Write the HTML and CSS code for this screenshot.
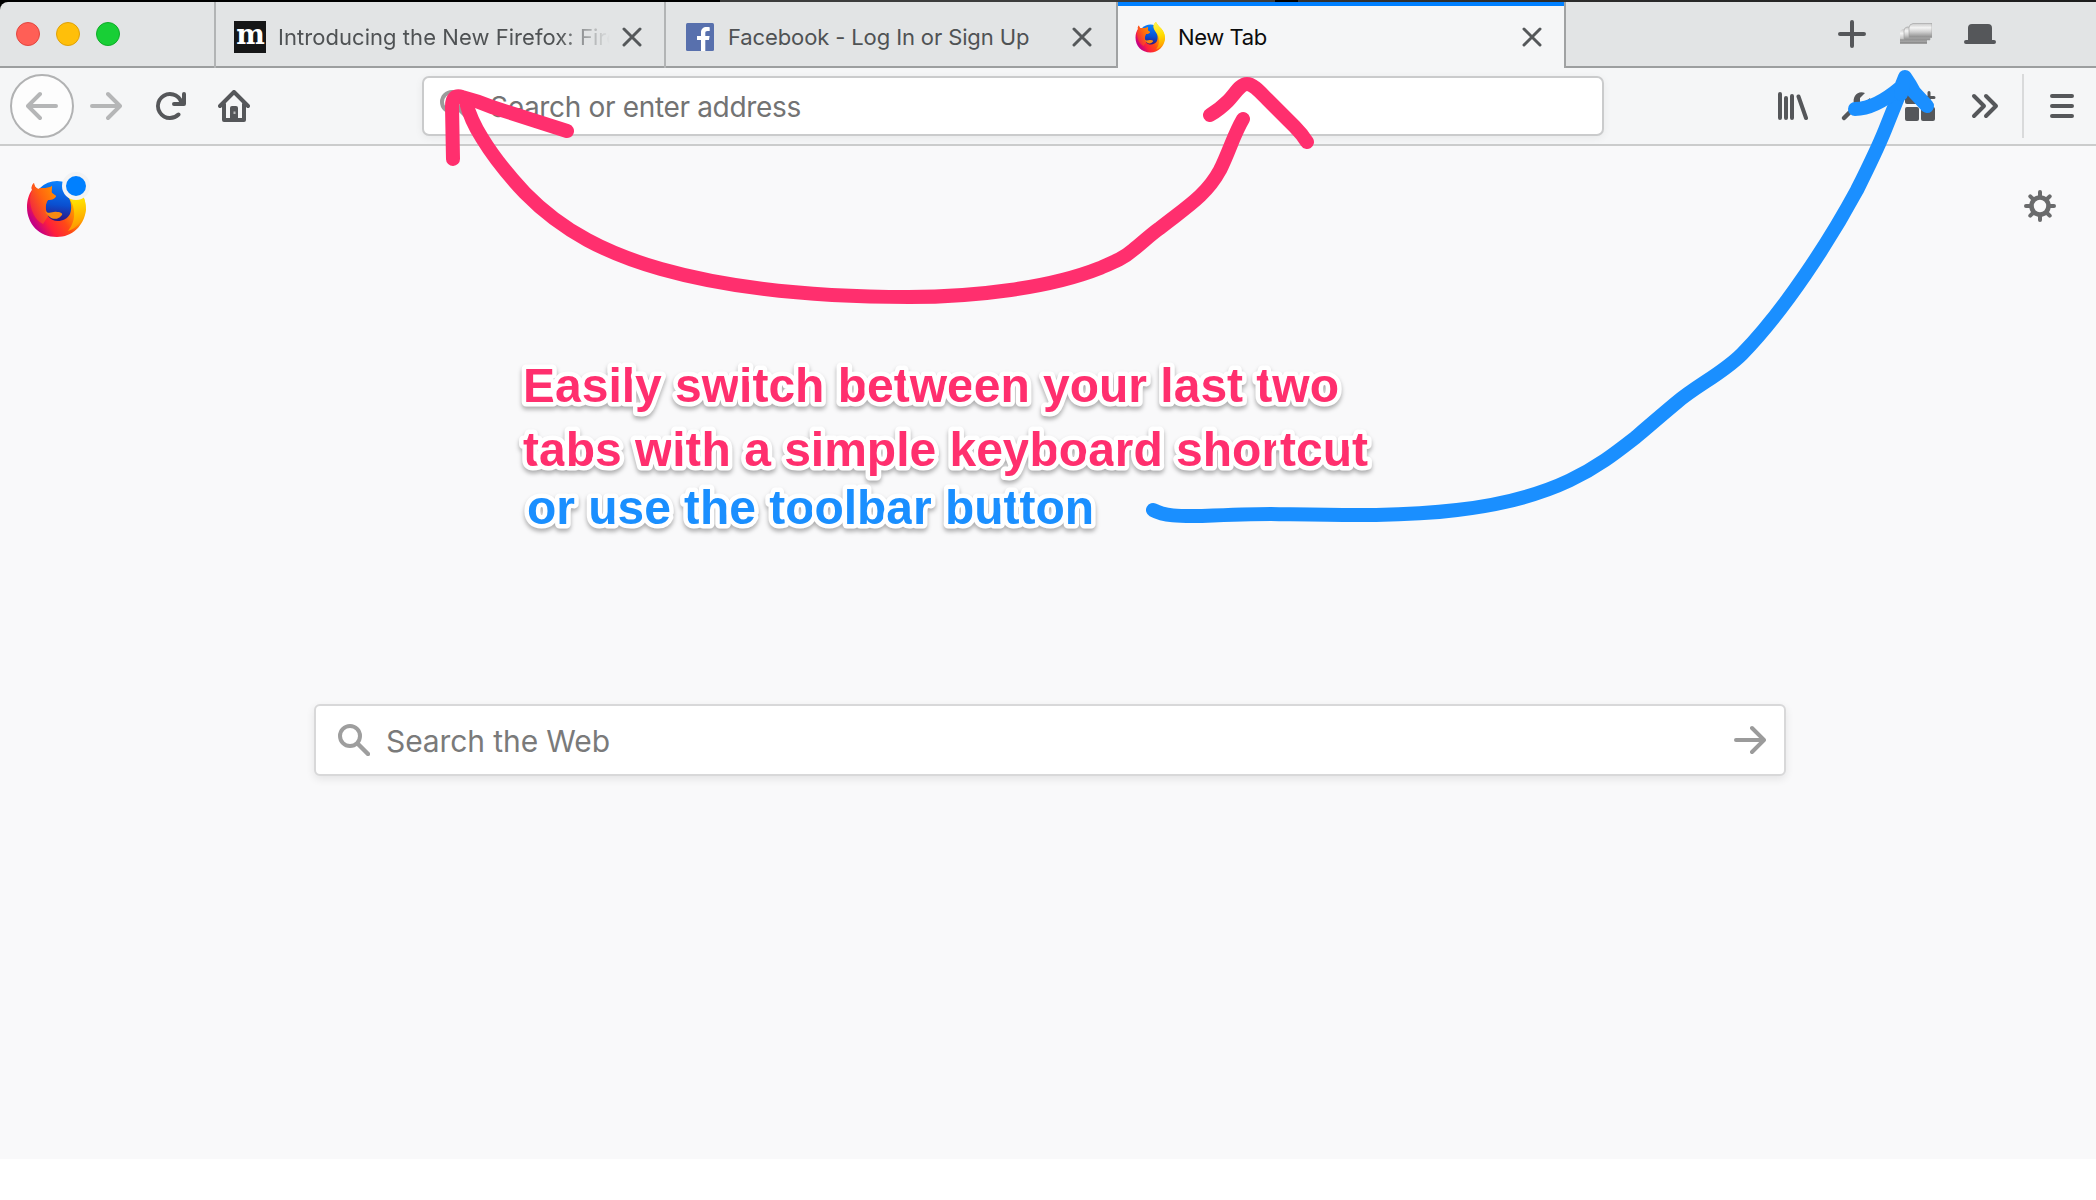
FILE: index.html
```html
<!DOCTYPE html>
<html lang="en">
<head>
<meta charset="utf-8">
<title>New Tab</title>
<link rel="stylesheet" href="styles.css">
</head>
<body>
<svg class="defs" width="0" height="0" aria-hidden="true">
  <defs>
    <linearGradient id="fox-body" x1="0.9" y1="0.2" x2="0.1" y2="0.75">
      <stop offset="0" stop-color="#ffe200"/><stop offset=".3" stop-color="#ff9a00"/><stop offset=".55" stop-color="#ff4a16"/><stop offset=".8" stop-color="#ff1f3c"/><stop offset="1" stop-color="#c40084"/>
    </linearGradient>
    <linearGradient id="fox-globe" x1=".6" y1="0" x2=".5" y2="1">
      <stop offset="0" stop-color="#0a84ff"/><stop offset=".5" stop-color="#0a4fd0"/><stop offset=".85" stop-color="#33107a"/>
    </linearGradient>
    <linearGradient id="fox-head" x1="1" y1="0" x2="0" y2=".8">
      <stop offset="0" stop-color="#ff9a00"/><stop offset=".5" stop-color="#ff6410"/><stop offset="1" stop-color="#ee1a4c"/>
    </linearGradient>
    <linearGradient id="fox-tail" x1=".4" y1="0" x2=".5" y2="1">
      <stop offset="0" stop-color="#fff44f"/><stop offset=".5" stop-color="#ffdc00"/><stop offset="1" stop-color="#ff9200"/>
    </linearGradient>
    <linearGradient id="stack" x1="0" y1="0" x2="0" y2="1">
      <stop offset="0" stop-color="#c9c9c9"/><stop offset=".3" stop-color="#f4f4f4"/><stop offset=".6" stop-color="#cfcfcf"/><stop offset="1" stop-color="#8a8a8a"/>
    </linearGradient>
    <symbol id="firefox" viewBox="0 0 64 64">
      <circle cx="33" cy="31" r="24" fill="url(#fox-globe)"/>
      <path d="M10 9C10 12 12 14 14 15C19 13 24 15 28 12C28 16 27 17 28 19L32 22C31 25 27 26 24 26C21 30 21 36 24 42C29 50 42 48 46 40C49 32 46 24 42 19C37 12 39 6 44 2C46 8 53 12 58 20C61 25 62 30 62 36C60 52 48 63 33 63C15 63 3 50 3 33C3 26 5 20 8 16C7 13 8 11 10 9Z" fill="url(#fox-body)"/>
      <path d="M44 2C46 8 53 12 58 20C62 27 62 33 61 39C58 48 53 54 44 57C49 51 52 42 49 32C47 24 39 19 39 11C39 7 41 4 44 2Z" fill="url(#fox-tail)"/>
      <path d="M10 9C10 12 12 14 14 15C19 13 24 15 28 12C28 16 27 17 28 19L32 22C31 25 27 26 24 26C21 30 21 36 24 42L19 50C11 46 6 36 6 24L8 16C7 13 8 11 10 9Z" fill="url(#fox-head)"/>
      <path d="M21 37C26 41 28 37 33 38C37 38 40 40 37 42C34 46 26 47 21 37Z" fill="#f78a12"/>
    </symbol>
    <symbol id="close" viewBox="0 0 20 20"><path d="M2 2L18 18M18 2L2 18" fill="none" stroke="#55585a" stroke-width="3" stroke-linecap="round"/></symbol>
    <symbol id="arrow" viewBox="0 0 16 16"><path d="M1 7h11.586L8.293 2.707a1 1 0 0 1 1.414-1.414l6 6a1 1 0 0 1 0 1.414l-6 6a1 1 0 0 1-1.414-1.414L12.586 9H1a1 1 0 0 1 0-2z"/></symbol>
    <symbol id="glass" viewBox="0 0 32 32"><path d="M20 20L30 30" stroke="currentColor" stroke-width="4.4" stroke-linecap="round"/><circle cx="12" cy="12" r="10" fill="none" stroke="currentColor" stroke-width="4"/></symbol>
  </defs>
</svg>

<div class="desktop-edge"></div>
<div class="window">
  <header class="tabbar">
    <div class="lights"><i class="light red"></i><i class="light yellow"></i><i class="light green"></i></div>
    <div class="tab first">
      <span class="fav-m">m</span>
      <span class="label fade">Introducing the New Firefox: Fire</span>
      <svg class="close"><use href="#close"/></svg>
    </div>
    <div class="tab second">
      <svg class="fav-f" viewBox="0 0 28 28"><rect width="28" height="28" rx="1.5" fill="#5870ad"/><path d="M15 28V17h-4v-4h4v-3.400C15 6 17.200 4 20.500 4c1.500 0 2.800.1 3.200.2v3.700h-2.200c-1.800 0-2.200.9-2.200 2.100v3h4.300l-.6 4h-3.700v11z" fill="#fff"/></svg>
      <span class="label">Facebook - Log In or Sign Up</span>
      <svg class="close"><use href="#close"/></svg>
    </div>
    <div class="tab active">
      <svg class="fav-fox"><use href="#firefox"/></svg>
      <span class="label">New Tab</span>
      <svg class="close"><use href="#close"/></svg>
    </div>
    <div class="tab-tools">
      <svg class="ico" viewBox="0 0 32 32"><path d="M16 4V28M4 16H28" stroke="#55575a" stroke-width="4" stroke-linecap="round"/></svg>
      <svg class="ico" viewBox="0 0 32 32"><path d="M0 15Q0 12 3 11H27V25.500H0Z" fill="url(#stack)"/><path d="M0 22H27M0 25H27" stroke="#868686"/><path d="M4 13Q4 9.500 7 9H30V22H4Z" fill="url(#stack)" stroke="#a0a0a0" stroke-width=".6"/><path d="M9 10Q9 6 13 5.500H32V19.500H9Z" fill="url(#stack)" stroke="#a0a0a0" stroke-width=".6"/></svg>
      <svg class="ico" viewBox="0 0 32 32"><path d="M4 22V10Q4 6 8 6H24Q28 6 28 10V22H30A2 2 0 0 1 30 26H2A2 2 0 0 1 2 22Z" fill="#55575a"/></svg>
    </div>
  </header>

  <nav class="toolbar">
    <div class="nav-buttons">
      <span class="back"><svg class="ico flip dim" viewBox="0 0 16 16"><use href="#arrow"/></svg></span>
      <svg class="ico dim" viewBox="0 0 16 16"><use href="#arrow"/></svg>
      <svg class="ico" viewBox="0 0 16 16"><path d="M15 1a1 1 0 0 0-1 1v2.418A6.995 6.995 0 1 0 8 15a6.954 6.954 0 0 0 4.950-2.050 1 1 0 0 0-1.414-1.414A5.019 5.019 0 1 1 12.549 6H10a1 1 0 0 0 0 2h5a1 1 0 0 0 1-1V2a1 1 0 0 0-1-1z"/></svg>
      <svg class="ico" viewBox="0 0 32 32"><path d="M2 16L16 2L30 16M6 14V30H26V14" fill="none" stroke="#55575a" stroke-width="4" stroke-linecap="round" stroke-linejoin="round"/><path d="M12 28V18Q12 16 14 16H18Q20 16 20 18V28Z"/><rect x="15.500" y="21.500" width="2" height="2.500" fill="#bbb"/></svg>
    </div>
    <div class="urlbar"><svg class="url-glass"><use href="#glass"/></svg><span>Search or enter address</span></div>
    <div class="actions">
      <svg class="ico" viewBox="0 0 32 32"><path d="M4 4V28M10 8V28M16 6V28M22.500 6.500L30 28" fill="none" stroke="#55575a" stroke-width="4" stroke-linecap="round"/></svg>
      <svg class="ico" viewBox="0 0 32 32"><path d="M4 28L16 16" stroke="#55575a" stroke-width="4.500" stroke-linecap="round"/><path d="M25 3L20 8V12H25L30 8C32 16 26 20 19 18L14 14C12 6 18 0 25 3Z"/></svg>
      <svg class="ico" viewBox="0 0 32 32"><rect x="1" y="1" width="14" height="13" rx="2"/><rect x="1" y="17" width="14" height="14" rx="2"/><rect x="17" y="17" width="14" height="14" rx="2"/><path d="M25 2.500V13M19 7.500H30" stroke="#55575a" stroke-width="3" stroke-linecap="round"/></svg>
      <svg class="ico" viewBox="0 0 32 32"><path d="M6 6L16 16L6 26M18 6L28 16L18 26" fill="none" stroke="#55575a" stroke-width="4" stroke-linecap="round" stroke-linejoin="round"/></svg>
      <i class="rule"></i>
      <svg class="ico menu" viewBox="0 0 32 32"><path d="M6 6H26M6 16H26M6 26H26" stroke="#55575a" stroke-width="4" stroke-linecap="round"/></svg>
    </div>
  </nav>

  <main class="page">
    <div class="page-head">
      <span class="logo"><svg class="logo-fox"><use href="#firefox"/></svg><i class="badge"></i></span>
      <svg class="gear" viewBox="-16 -16 32 32"><circle r="8.500" fill="none" stroke="#6a6b6c" stroke-width="4.600"/><path d="M0-10V-14M0 10V14M-10 0H-14M10 0H14M-7-7L-9.700-9.700M7 7L9.700 9.700M7-7L9.700-9.700M-7 7L-9.700 9.700" stroke="#6a6b6c" stroke-width="4" stroke-linecap="round"/></svg>
    </div>
    <div class="websearch"><svg class="web-glass"><use href="#glass"/></svg><span>Search the Web</span><svg class="go" viewBox="0 0 16 16"><use href="#arrow"/></svg></div>
  </main>
</div>

<svg class="annotations" viewBox="0 0 2096 1200">
  <g class="stroke pink">
    <path d="M453 159L452 106Q452 94 462 97Q478 101 492 107L567 131"/>
    <path d="M466 102C470 118 475 127 482 138C496 161 509 176 525 193C563 232 608 254 661 269C735 290 820 297 909 297C975 297 1050 288 1100 268C1114 262 1124 258 1133 250C1142 243 1150 235 1160 228C1185 208 1206 196 1220 170C1229 152 1234 134 1243 119"/>
    <path d="M1210 115C1217 111 1223 106 1228 101C1235 94 1240 84 1247 84C1253 84 1260 92 1267 99L1295 127Q1302 134 1307 142"/>
  </g>
  <g class="stroke blue">
    <path d="M1153 510C1166 517 1184 516 1202 516C1225 515 1248 514 1271 514C1335 515 1400 517 1457 510C1560 498 1600 465 1636 437C1650 425 1664 413 1676 403C1697 385 1722 374 1742 354C1785 310 1830 240 1857 190C1868 168 1877 150 1885 130L1901 90"/>
    <path d="M1855 109C1872 109 1888 98 1901 87L1905 77Q1910 84 1914 92L1927 106"/>
    <path d="M1904 82L1901 94"/>
  </g>
  <g class="captions">
    <text class="pink-text" x="523" y="402" textLength="816">Easily switch between your last two</text>
    <text class="pink-text" x="523" y="466" textLength="845">tabs with a simple keyboard shortcut</text>
    <text class="blue-text" x="527" y="524" textLength="567">or use the toolbar button</text>
  </g>
</svg>
</body>
</html>
```
FILE: styles.css
```css
* { box-sizing: border-box; }
html, body { margin: 0; padding: 0; }
body {
  position: relative;
  width: 2096px;
  height: 1200px;
  overflow: hidden;
  background: #fff;
  font-family: Inter, "Liberation Sans", sans-serif;
}
svg { display: block; flex: none; }
.defs { position: absolute; }
.desktop-edge { height: 2px; background: linear-gradient(90deg, #000 720px, #3c3c3c 720px, #3c3c3c 1275px, #000 1275px, #000 1298px, #333 1298px, #1c1c1c); }
.window { height: 1157px; background: linear-gradient(#000 12px, #f9f9fa 12px); display: flex; flex-direction: column; }

/* Tab strip */
.tabbar {
  height: 66px;
  display: flex;
  background: linear-gradient(#e2e4e5 64px, #9c9e9f 64px);
  border-top-left-radius: 8px;
}
.lights { width: 214px; display: flex; gap: 16px; padding: 20px 0 0 16px; }
.light { width: 24px; height: 24px; border-radius: 50%; border: 1px solid; }
.red { background: #ff5f56; border-color: #e2463f; }
.yellow { background: #ffbf0a; border-color: #dfa108; }
.green { background: #18cf36; border-color: #0fac28; }
.tab { display: flex; align-items: center; height: 66px; color: #4f5254; font-size: 22px; }
.first { width: 450px; border-left: 2px solid #b2b4b5; padding-left: 18px; }
.second { width: 454px; border-left: 2px solid #b2b4b5; border-right: 2px solid #a0a2a3; padding-left: 20px; }
.active { width: 446px; background: #f5f6f7; border-top: 4px solid #0080ff; padding: 0 0 4px 16px; color: #0c0c0d; }
.label { white-space: nowrap; line-height: 30px; padding-top: 3px; }
.first .label { width: 334px; margin-left: 12px; letter-spacing: .05px; }
.second .label { margin-left: 14px; letter-spacing: -.12px; }
.active .label { margin-left: 12px; letter-spacing: -.4px; }
.fade { -webkit-mask-image: linear-gradient(90deg, #000 280px, transparent 332px); mask-image: linear-gradient(90deg, #000 280px, transparent 332px); }
.close { width: 20px; height: 20px; margin: 4px 22px 0 auto; }
.second .close { margin-right: 24px; }
.fav-m {
  width: 32px; height: 32px; margin-top: 4px; background: #151617; color: #fff;
  font: bold 27px/32px "DejaVu Serif", serif; letter-spacing: -1px;
  display: flex; align-items: center; justify-content: center; padding-bottom: 5px;
}
.fav-f { width: 28px; height: 28px; margin-top: 4px; }
.fav-fox { width: 32px; height: 32px; margin-top: 4px; }
.tab-tools { flex: 1; height: 66px; display: flex; gap: 32px; padding: 16px 0 0 270px; border-left: 2px solid #a0a2a3; }
.ico { width: 32px; height: 32px; fill: #55575a; }

/* Navigation bar */
.toolbar { height: 78px; background: #f5f6f7; border-bottom: 2px solid #cbcccc; display: flex; align-items: center; }
.nav-buttons { width: 422px; display: flex; align-items: center; gap: 32px; padding-left: 10px; }
.back { width: 64px; height: 64px; border: 2px solid #b1b2b3; border-radius: 50%; background: #fdfdfd; display: flex; align-items: center; justify-content: center; margin-right: -16px; }
.flip { transform: scaleX(-1); }
.dim { fill: #b5b6b7; }
.urlbar {
  width: 1182px; height: 60px; border: 2px solid #cacbcc; border-radius: 7px; background: #fff;
  box-shadow: 0 2px 8px rgba(0,0,0,.06); display: flex; align-items: center; padding-left: 16px;
  font-size: 28px; color: #737373;
}
.urlbar span { margin-left: 22px; padding-top: 2px; letter-spacing: -.33px; white-space: nowrap; }
.url-glass { width: 32px; height: 32px; color: #9b9b9b; margin-right: -4px; }
.actions { flex: 1; display: flex; align-items: center; padding-left: 172px; gap: 32px; }
.rule { width: 2px; height: 64px; background: #d9dadb; margin-left: -10px; }
.menu { margin-left: -10px; }

/* New tab page */
.page { flex: 1; background: #f9f9fa; }
.page-head { display: flex; justify-content: space-between; align-items: flex-start; padding: 28px 40px 0 24px; height: 558px; }
.logo { position: relative; width: 64px; height: 64px; }
.logo-fox { width: 64px; height: 64px; }
.badge { position: absolute; left: 38px; top: -2px; width: 28px; height: 28px; border: 4px solid #f3f3f4; border-radius: 50%; background: #0080ff; }
.gear { width: 32px; height: 32px; margin-top: 16px; }
.websearch {
  width: 1472px; height: 72px; margin-left: 314px; border: 2px solid #d8d8d9; border-radius: 6px; background: #fff;
  box-shadow: 0 3px 8px rgba(0,0,0,.09); display: flex; align-items: center; padding: 0 18px 0 22px;
  font-size: 30px; color: #7a7a7a;
}
.websearch span { margin-left: 16px; padding-top: 2px; letter-spacing: -.1px; white-space: nowrap; }
.web-glass { width: 32px; height: 32px; color: #9e9e9e; }
.go { width: 32px; height: 32px; margin-left: auto; fill: #9b9b9b; }

/* Hand-drawn notes over the window */
.annotations { position: absolute; left: 0; top: 0; width: 2096px; height: 1200px; }
.stroke { fill: none; stroke-width: 14px; stroke-linecap: round; stroke-linejoin: round; }
.pink { stroke: #ff2f6e; }
.blue { stroke: #1a8fff; }
.captions {
  font: bold 48px "Liberation Sans", sans-serif;
  filter: drop-shadow(0 3px 2px rgba(0,0,0,.3));
}
.captions text { stroke: #fff; stroke-width: 9px; stroke-linejoin: round; paint-order: stroke; }
.pink-text { fill: #ff2f6e; }
.blue-text { fill: #1a8fff; }
```
